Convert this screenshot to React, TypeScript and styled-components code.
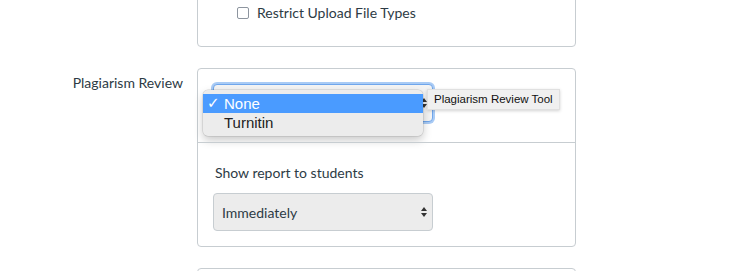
import React from "react";
import styled, { createGlobalStyle } from "styled-components";

const Global = createGlobalStyle`
  html, body { margin: 0; padding: 0; background: #fff; }
  body { font-family: Lato, "Noto Sans", sans-serif; color: #2d3b45; overflow: hidden; }
`;

const Page = styled.div`
  display: grid;
  grid-template-columns: 183px 379px;
  column-gap: 14px;
  row-gap: 21px;
  margin-top: -30px;
`;

const Label = styled.div`
  text-align: right;
  font-size: 14px;
  line-height: 20px;
  padding-top: 5px;
`;

const Card = styled.div<{ $pad?: string }>`
  border: 1px solid #c7cdd1;
  border-radius: 4px;
  padding: ${(p) => p.$pad || "0"};
  box-sizing: border-box;
  min-height: 60px;
`;

const CheckRow = styled.label`
  display: flex;
  align-items: center;
  gap: 8px;
  padding-left: 25px;
  font-size: 14px;
  line-height: 20px;
`;

const Box = styled.span`
  width: 10px;
  height: 10px;
  border: 1px solid #8d959f;
  border-radius: 2px;
  background: #fff;
`;

const Section = styled.div<{ $pad: string; $divider?: boolean }>`
  position: relative;
  padding: ${(p) => p.$pad};
  border-top: ${(p) => (p.$divider ? "1px solid #c7cdd1" : "none")};
`;

const Select = styled.div<{ $focus?: boolean }>`
  width: 220px;
  height: 38px;
  box-sizing: border-box;
  border: 1px solid ${(p) => (p.$focus ? "#6fa6ec" : "#c7cdd1")};
  border-radius: 4px;
  background: ${(p) => (p.$focus ? "#f4f4f4" : "#ececec")};
  box-shadow: ${(p) => (p.$focus ? "0 0 0 2px #a9cbf5" : "none")};
  display: flex;
  align-items: center;
  justify-content: space-between;
  padding: 0 4px 0 8px;
  font-size: 14px;
  color: #2d3b45;
`;

const FieldLabel = styled.div`
  font-size: 14px;
  line-height: 20px;
  margin-bottom: 10px;
  padding-left: 2px;
`;

const Popup = styled.div`
  position: absolute;
  left: 5px;
  top: 21px;
  width: 220px;
  padding: 4px 0 4px;
  background: #ececec;
  border-radius: 5px;
  box-shadow: 0 0 0 0.5px rgba(0, 0, 0, 0.15), 0 4px 10px rgba(0, 0, 0, 0.22);
  font-family: "Liberation Sans", Arial, sans-serif;
  font-size: 15px;
`;

const Option = styled.div<{ $active?: boolean }>`
  height: 19px;
  line-height: 19px;
  padding-left: 21px;
  position: relative;
  background: ${(p) => (p.$active ? "#4a9bff" : "transparent")};
  color: ${(p) => (p.$active ? "#fff" : "#222")};
`;

const Check = styled.span`
  position: absolute;
  left: 4px;
  top: 0;
  font-size: 15px;
  font-weight: bold;
  font-family: "DejaVu Sans", sans-serif;
`;

const Tip = styled.div`
  position: absolute;
  left: 229px;
  top: 20px;
  height: 19px;
  line-height: 19px;
  padding: 0 6px;
  background: #f0f0f0;
  border: 1px solid #e0e0e0;
  box-shadow: 0 1px 3px rgba(0, 0, 0, 0.18);
  font-family: "Liberation Sans", Arial, sans-serif;
  font-size: 11.5px;
  color: #111;
  white-space: nowrap;
`;

const Arrows = () => (
  <svg width="8" height="12" viewBox="0 0 8 12">
    <path d="M4 1 L7 5 L1 5 Z" fill="#333" />
    <path d="M4 11 L7 7 L1 7 Z" fill="#333" />
  </svg>
);

export default function App() {
  return (
    <>
      <Global />
      <Page>
        <div />
        <Card $pad="32px 14px 23px">
          <CheckRow>
            <Box />
            Restrict Upload File Types
          </CheckRow>
        </Card>

        <Label>Plagiarism Review</Label>
        <Card>
          <Section $pad="15px 15px 20px">
            <Select $focus>
              <span />
              <Arrows />
            </Select>
            <Popup>
              <Option $active>
                <Check>✓</Check>None
              </Option>
              <Option>Turnitin</Option>
            </Popup>
            <Tip>Plagiarism Review Tool</Tip>
          </Section>
          <Section $pad="20px 15px 15px" $divider>
            <FieldLabel>Show report to students</FieldLabel>
            <Select>
              <span>Immediately</span>
              <Arrows />
            </Select>
          </Section>
        </Card>

        <div />
        <Card />
      </Page>
    </>
  );
}
